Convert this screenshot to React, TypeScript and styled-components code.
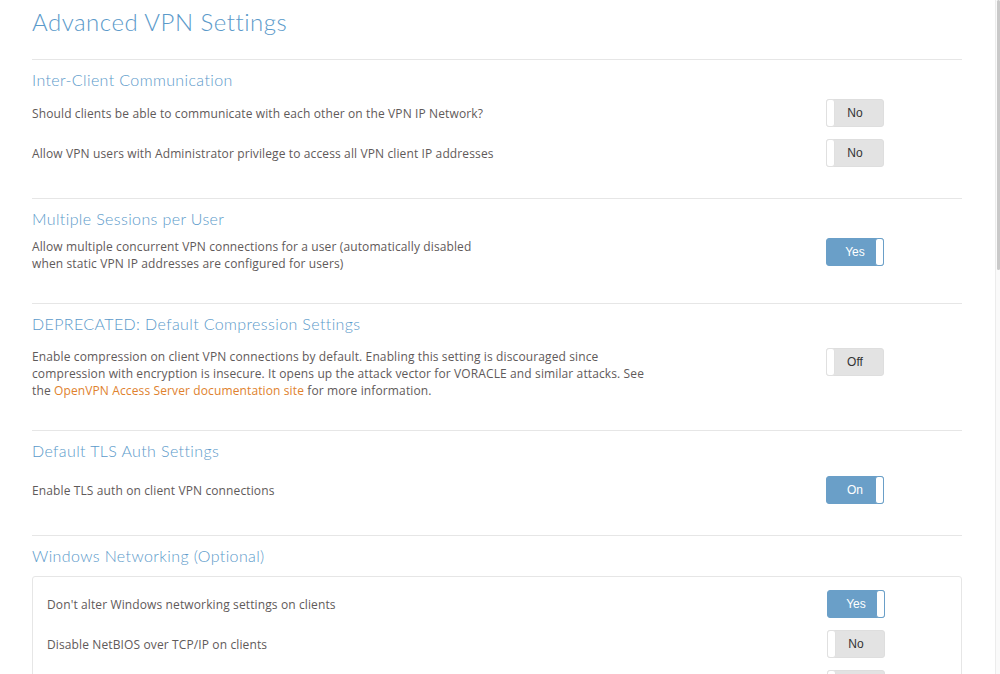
import React from "react";
import styled, { createGlobalStyle } from "styled-components";

const Global = createGlobalStyle`
  html, body { margin: 0; padding: 0; background: #ffffff; overflow: hidden; }
  body { font-family: "Open Sans", "Liberation Sans", sans-serif; }
`;

const Page = styled.div`
  width: 930px;
  padding: 7px 38px 0 32px;
`;

const Title = styled.h1`
  margin: 0 0 22px;
  font-family: "Lato", "Open Sans", sans-serif;
  font-weight: 300;
  font-size: 24px;
  line-height: 30px;
  letter-spacing: 0.5px;
  color: #5b9aca;
`;

const Section = styled.section`
  border-top: 1px solid #e6e6e6;
  padding: 10px 0 31px;
`;

const SectionTitle = styled.h2<{ $gap: number }>`
  margin: 0 0 ${(p) => p.$gap}px;
  font-family: "Lato", "Open Sans", sans-serif;
  font-weight: 300;
  font-size: 16px;
  line-height: 20px;
  letter-spacing: 0.38px;
  color: #5b9aca;
`;

const Rows = styled.div`
  display: flex;
  flex-direction: column;
  gap: 12px;
`;

const Row = styled.div<{ $label: number; $top?: boolean }>`
  display: grid;
  grid-template-columns: ${(p) => p.$label}px 58px;
  align-items: ${(p) => (p.$top ? "start" : "center")};
`;

const Label = styled.div`
  font-family: "Open Sans", sans-serif;
  font-size: 12px;
  line-height: 17px;
  letter-spacing: 0.12px;
  color: #5f5a5a;
`;

const Link = styled.a`
  color: #e0822e;
  text-decoration: none;
`;

const Panel = styled.div`
  border: 1px solid #e6e6e6;
  border-radius: 3px;
  padding: 13px 14px 14px 14px;
`;

const ToggleBox = styled.div<{ $on: boolean }>`
  position: relative;
  box-sizing: border-box;
  width: 58px;
  height: 28px;
  border-radius: 3px;
  border: 1px solid ${(p) => (p.$on ? "#6a9fc8" : "#dedede")};
  background: ${(p) => (p.$on ? "#6a9fc8" : "#e3e3e3")};
  color: ${(p) => (p.$on ? "#ffffff" : "#333333")};
  font-family: "Liberation Sans", Arial, sans-serif;
  font-size: 12px;
  display: flex;
  align-items: center;
  justify-content: center;
`;

const Knob = styled.span<{ $on: boolean }>`
  position: absolute;
  top: -1px;
  bottom: -1px;
  width: 9px;
  ${(p) => (p.$on ? "right: -1px;" : "left: -1px;")}
  background: #ffffff;
  border: 1px solid ${(p) => (p.$on ? "#6a9fc8" : "#e0e0e0")};
  border-radius: 3px;
  box-sizing: border-box;
`;

const Scrollbar = styled.div`
  position: fixed;
  top: 0;
  right: 0;
  width: 4px;
  height: 100%;
  background: #fafafa;
  border-left: 1px solid #ececec;
`;

const Thumb = styled.div`
  width: 3px;
  margin-left: 1px;
  height: 270px;
  border-radius: 2px;
  background: #c9c9c9;
`;

function Toggle({ on, text }: { on: boolean; text: string }) {
  return (
    <ToggleBox $on={on}>
      <Knob $on={on} />
      {text}
    </ToggleBox>
  );
}

export default function App() {
  return (
    <>
      <Global />
      <Page>
        <Title>Advanced VPN Settings</Title>

        <Section>
          <SectionTitle $gap={9}>Inter-Client Communication</SectionTitle>
          <Rows>
            <Row $label={794}>
              <Label>Should clients be able to communicate with each other on the VPN IP Network?</Label>
              <Toggle on={false} text="No" />
            </Row>
            <Row $label={794}>
              <Label>Allow VPN users with Administrator privilege to access all VPN client IP addresses</Label>
              <Toggle on={false} text="No" />
            </Row>
          </Rows>
        </Section>

        <Section>
          <SectionTitle $gap={9}>Multiple Sessions per User</SectionTitle>
          <Rows>
            <Row $label={794} $top>
              <Label>
                Allow multiple concurrent VPN connections for a user (automatically disabled
                <br />
                when static VPN IP addresses are configured for users)
              </Label>
              <Toggle on text="Yes" />
            </Row>
          </Rows>
        </Section>

        <Section>
          <SectionTitle $gap={14}>DEPRECATED: Default Compression Settings</SectionTitle>
          <Rows>
            <Row $label={794} $top>
              <Label>
                Enable compression on client VPN connections by default. Enabling this setting is discouraged since
                <br />
                compression with encryption is insecure. It opens up the attack vector for VORACLE and similar attacks. See
                <br />
                the <Link href="#">OpenVPN Access Server documentation site</Link> for more information.
              </Label>
              <Toggle on={false} text="Off" />
            </Row>
          </Rows>
        </Section>

        <Section>
          <SectionTitle $gap={15}>Default TLS Auth Settings</SectionTitle>
          <Rows>
            <Row $label={794}>
              <Label>Enable TLS auth on client VPN connections</Label>
              <Toggle on text="On" />
            </Row>
          </Rows>
        </Section>

        <Section>
          <SectionTitle $gap={10}>Windows Networking (Optional)</SectionTitle>
          <Panel>
            <Rows>
              <Row $label={780}>
                <Label>Don't alter Windows networking settings on clients</Label>
                <Toggle on text="Yes" />
              </Row>
              <Row $label={780}>
                <Label>Disable NetBIOS over TCP/IP on clients</Label>
                <Toggle on={false} text="No" />
              </Row>
              <Row $label={780}>
                <Label />
                <Toggle on={false} text="" />
              </Row>
            </Rows>
          </Panel>
        </Section>
      </Page>
      <Scrollbar>
        <Thumb />
      </Scrollbar>
    </>
  );
}
